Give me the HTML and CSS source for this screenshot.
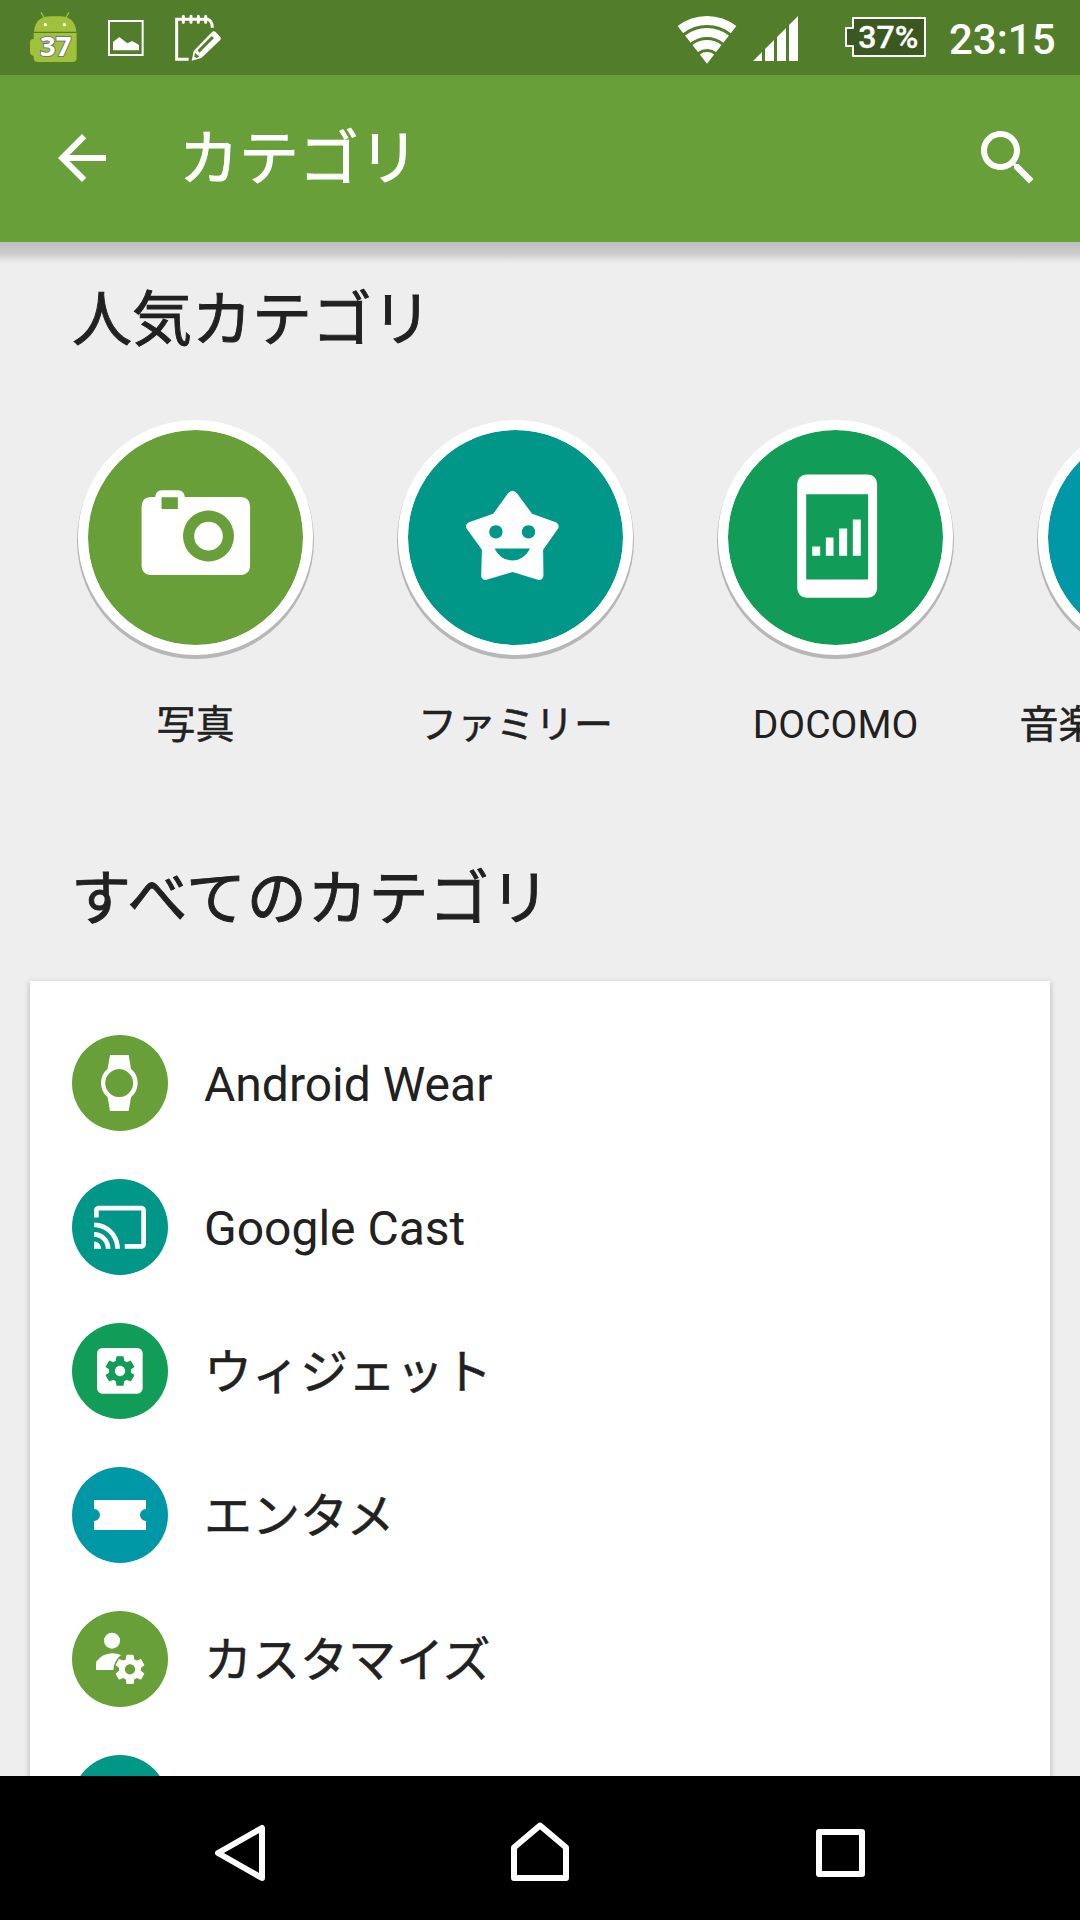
FILE: index.html
```html
<!DOCTYPE html>
<html lang="ja">
<head>
<meta charset="utf-8">
<title>カテゴリ</title>
<link rel="stylesheet" href="styles.css">
</head>
<body>
<svg class="defs" width="0" height="0" aria-hidden="true">
  <symbol id="gear" viewBox="0 0 24 24"><path d="M19.43 12.98c.04-.32.07-.64.07-.98s-.03-.66-.07-.98l2.11-1.65c.19-.15.24-.42.12-.64l-2-3.46c-.12-.22-.39-.3-.61-.22l-2.49 1c-.52-.4-1.08-.73-1.69-.98l-.38-2.65C14.46 2.18 14.25 2 14 2h-4c-.25 0-.46.18-.49.42l-.38 2.65c-.61.25-1.17.59-1.69.98l-2.49-1c-.23-.09-.49 0-.61.22l-2 3.46c-.13.22-.07.49.12.64l2.11 1.65c-.04.32-.07.65-.07.98s.03.66.07.98l-2.11 1.65c-.19.15-.24.42-.12.64l2 3.46c.12.22.39.3.61.22l2.49-1c.52.4 1.08.73 1.69.98l.38 2.65c.03.24.24.42.49.42h4c.25 0 .46-.18.49-.42l.38-2.65c.61-.25 1.17-.59 1.69-.98l2.49 1c.23.09.49 0 .61-.22l2-3.46c.12-.22.07-.49-.12-.64l-2.11-1.65zM12 15.5c-1.93 0-3.5-1.57-3.5-3.5s1.57-3.5 3.5-3.5 3.5 1.57 3.5 3.5-1.57 3.5-3.5 3.5z"/></symbol>
</svg>
<div class="screen">
  <header class="status">
    <div class="status-left">
      <svg width="47" height="75" viewBox="90 0 141 225">
        <g fill="#a0c13c">
          <path d="M123 37L133 54M207 37L197 54" stroke="#a0c13c" stroke-width="4"/>
          <path d="M102 95Q106 49 152 49H178Q225 49 229 95z"/>
          <path d="M101 99H230V174Q230 186 218 186H113Q101 186 101 174V167Q90 166 90 155V126Q90 117 101 117z"/>
        </g>
        <circle cx="136" cy="74" r="5" fill="#fff"/><circle cx="193" cy="74" r="5" fill="#fff"/>
        <text class="badge-num" x="167" y="168" text-anchor="middle">37</text>
      </svg>
      <svg width="36" height="75" viewBox="324 0 108 225">
        <rect x="327" y="63" width="101" height="102" fill="none" stroke="#fff" stroke-width="6"/>
        <path fill="#fff" d="M339 151V126L358 111L382 130L397 123L417 135V151z"/>
      </svg>
      <svg width="46" height="75" viewBox="525 0 138 225">
        <path fill="none" stroke="#fff" stroke-width="9" d="M566 178H530V58H624Q637 63 637 83"/>
        <path stroke="#fff" stroke-width="9" stroke-linecap="round" d="M550 49V67M573 49V67M595 49V67M617 49V67"/>
        <path fill="#fff" fill-rule="evenodd" d="M575 182L581 153L636 96Q641 91 647 96L660 110Q665 115 660 121L604 174zM598 158L642 114L635 108L593 151zM585 158L583 170L590 174L599 168L592 166z"/>
      </svg>
    </div>
    <div class="status-right">
      <svg class="wifi" width="60" height="75" viewBox="51 0 180 225">
        <g fill="none" stroke="#fff" stroke-width="27">
          <path d="M61.3 88.9A129.5 129.5 0 0 1 220.7 88.9"/>
          <path d="M83.5 117.3A93.5 93.5 0 0 1 198.5 117.3"/>
          <path d="M105.6 145.6A57.5 57.5 0 0 1 176.4 145.6"/>
        </g>
        <path fill="#fff" d="M141 191L119.5 163.4A35 35 0 0 1 162.5 163.4z"/>
      </svg>
      <svg class="signal" width="45" height="75" viewBox="279 0 135 225">
        <path fill="#fff" d="M279 183L306 156V183zM315 183V147L342 120V183zM351 183V111L378 84V183zM387 183V75L414 48V183z"/>
      </svg>
      <svg class="battery" width="81" height="75" viewBox="555 0 243 225">
        <path fill="#3a581f" stroke="#fff" stroke-width="6" stroke-linejoin="round" d="M579 54H795V168H579V138H558V84H579z"/>
        <text class="battery-num" x="685" y="144" text-anchor="middle">37%</text>
      </svg>
      <span class="clock">23:15</span>
    </div>
  </header>

  <div class="appbar">
    <svg class="bar-icon" viewBox="0 0 24 24"><path d="M20 11H7.83l5.59-5.59L12 4l-8 8 8 8 1.41-1.41L7.83 13H20v-2z"/></svg>
    <h1 class="title">カテゴリ</h1>
    <svg class="bar-icon" viewBox="0 0 24 24"><path d="M15.5 14h-.79l-.28-.27C15.41 12.59 16 11.11 16 9.5 16 5.91 13.09 3 9.5 3S3 5.91 3 9.5 5.91 16 9.5 16c1.61 0 3.09-.59 4.23-1.57l.27.28v.79l5 4.99L20.49 19l-4.99-5zm-6 0C7.01 14 5 11.99 5 9.5S7.01 5 9.5 5 14 7.01 14 9.5 11.99 14 9.5 14z"/></svg>
  </div>

  <main class="content">
    <h2 class="heading">人気カテゴリ</h2>
    <div class="popular">
      <div class="pop">
        <div class="disc olive">
          <svg viewBox="84 88 646 646">
            <path fill-rule="evenodd" d="M286 289Q288 269 305 269H356Q372 269 375 289H544Q571 291 571 317V497Q570 522 544 524H272Q246 522 245 497V317Q246 290 272 289zM305 290V325H354V290zM446 330a76.500 76.500 0 1 0 .1 0z"/>
            <circle cx="446" cy="407" r="43"/>
          </svg>
        </div>
        <span class="pop-label ja">写真</span>
      </div>
      <div class="pop">
        <div class="disc teal">
          <svg viewBox="84 88 646 646">
            <path fill-rule="evenodd" d="M384 279Q398 262 412 279L457 340L528 365Q541 371 535 384L490 448L491 525Q489 541 474 538L398 515L320 538Q305 540 304 525L306 448L260 384Q254 371 267 365L340 340zM344 444Q362 480 398 480Q432 480 451 444zM348 374a20 20 0 1 0 .1 0zM446 374a20 20 0 1 0 .1 0z"/>
          </svg>
        </div>
        <span class="pop-label ja">ファミリー</span>
      </div>
      <div class="pop">
        <div class="disc green">
          <svg viewBox="84 88 646 646">
            <path fill-rule="evenodd" d="M320 222H504Q530 224 532 250V564Q530 590 504 592H320Q294 590 292 564V250Q294 224 320 222zM319 281V537H505V281z"/>
            <path d="M337 438h24v28h-24zM378 411h23v55h-23zM418 384h24v82h-24zM459 357h24v109h-24z"/>
          </svg>
        </div>
        <span class="pop-label">DOCOMO</span>
      </div>
      <div class="pop">
        <div class="disc cyan"></div>
        <span class="pop-label ja pop-label-start">音楽</span>
      </div>
    </div>

    <h2 class="heading heading-all">すべてのカテゴリ</h2>
    <ul class="card">
      <li class="row">
        <svg class="dot olive" viewBox="0 0 288 288">
          <path fill-rule="evenodd" d="M114 60H170L177 101A56 56 0 0 1 177 187L170 228H114L107 187A56 56 0 0 1 107 101zM141.500 102a42 42 0 1 0 .1 0z"/>
        </svg>
        <span>Android Wear</span>
      </li>
      <li class="row">
        <svg class="dot teal" viewBox="0 0 288 288">
          <path transform="translate(58.900 58.500) scale(7.090 7.170)" d="M21 3H3c-1.100 0-2 .9-2 2v3h2V5h18v14h-7v2h7c1.100 0 2-.9 2-2V5c0-1.100-.9-2-2-2zM1 18v3h3c0-1.660-1.340-3-3-3zm0-4v2c2.760 0 5 2.240 5 5h2c0-3.870-3.130-7-7-7zm0-4v2c4.970 0 9 4.030 9 9h2c0-6.080-4.930-11-11-11z"/>
        </svg>
        <span>Google Cast</span>
      </li>
      <li class="row">
        <svg class="dot green" viewBox="0 0 288 288">
          <rect x="75" y="75" width="137" height="137" rx="16"/>
          <use class="gear-green" href="#gear" x="91.200" y="91.200" width="105.600" height="105.600"/>
        </svg>
        <span class="ja">ウィジェット</span>
      </li>
      <li class="row">
        <svg class="dot cyan" viewBox="0 0 288 288">
          <path d="M66 99H222V126A18 18 0 1 0 222 162V189H66V162A18 18 0 1 0 66 126z"/>
        </svg>
        <span class="ja">エンタメ</span>
      </li>
      <li class="row">
        <svg class="dot olive" viewBox="0 0 288 288">
          <circle cx="120" cy="89" r="24"/>
          <path d="M72 177V153Q90 128 120 127Q135 127 147 132Q126 149 124 177z"/>
          <use href="#gear" x="121.200" y="122.200" width="105.600" height="105.600"/>
        </svg>
        <span class="ja">カスタマイズ</span>
      </li>
      <li class="row">
        <svg class="dot teal" viewBox="0 0 288 288"></svg>
      </li>
    </ul>
  </main>

  <nav class="navbar">
    <svg viewBox="0 0 72 72"><path d="M58 16V66L14 41z"/></svg>
    <svg viewBox="0 0 72 72"><path d="M10 66V35.500L36 13.500L62 35.500V66z"/></svg>
    <svg viewBox="0 0 72 72"><path d="M15 20H58V62H15z"/></svg>
  </nav>
</div>
</body>
</html>
```
FILE: styles.css
```css
* { box-sizing: border-box; }

body {
  margin: 0;
  font-family: Roboto, "Noto Sans CJK JP", sans-serif;
  color: #212121;
}

.defs { display: block; }

.screen {
  display: flex;
  flex-direction: column;
  width: 1080px;
  height: 1920px;
  overflow: hidden;
  background: #eee;
}

h1, h2, ul { margin: 0; padding: 0; font-weight: 400; }

/* Japanese glyphs are drawn a touch heavier than the Latin ones */
.title, .heading { -webkit-text-stroke: .9px currentColor; }
.ja { -webkit-text-stroke: .5px currentColor; }

/* Status bar */
.status {
  display: flex;
  justify-content: space-between;
  flex: none;
  height: 75px;
  padding: 0 25px 0 30px;
  background: #527d2b;
  color: #fff;
}
.status svg { display: block; flex: none; }
.status-left { display: flex; gap: 31px; }
.status-right { display: flex; }
.signal { margin-left: 16px; }
.battery { margin-left: 47px; }
.clock {
  width: 106px;
  margin-left: 23px;
  font-size: 42px;
  font-weight: 500;
  line-height: 79px;
  white-space: nowrap;
}
.badge-num {
  font-family: "Open Sans", sans-serif;
  font-size: 82px;
  font-weight: 700;
  fill: #fff;
  stroke: #777;
  stroke-width: 6px;
  paint-order: stroke;
}
.battery-num {
  font-size: 96px;
  font-weight: 500;
  fill: #fff;
  stroke: #fff;
  stroke-width: 1px;
}

/* App bar */
.appbar {
  position: relative;
  z-index: 1;
  display: flex;
  align-items: center;
  flex: none;
  height: 167px;
  padding: 0 36px 1px 46px;
  background: #689f38;
  color: #fff;
}
.appbar::after {
  content: "";
  position: absolute;
  top: 100%;
  left: 0;
  right: 0;
  height: 22px;
  background: linear-gradient(rgba(0, 0, 0, .2), rgba(0, 0, 0, .14) 55%, rgba(0, 0, 0, .04) 82%, transparent);
}
.bar-icon { flex: none; width: 72px; height: 72px; fill: #fff; }
.title {
  flex: 1;
  padding: 4px 0 0 61px;
  font-size: 60px;
  line-height: 80px;
}

/* Scrolling content */
.content { flex: 1; min-height: 0; overflow: hidden; }
.heading {
  margin: 39px 0 0 72px;
  font-size: 60px;
  line-height: 80px;
}

.popular {
  display: flex;
  width: 1400px;
  margin-top: 59px;
  padding-left: 35.5px;
}
.pop {
  display: flex;
  flex-direction: column;
  align-items: center;
  width: 320px;
}
.disc {
  width: 235px;
  height: 235px;
  border: 10px solid #fff;
  border-radius: 50%;
  box-shadow: 0 3px 0 1px #b7b7b7;
  background-clip: padding-box;
}
.disc svg { display: block; width: 215px; height: 215px; fill: #fff; }
.pop-label {
  margin-top: 45px;
  font-size: 39px;
  line-height: 50px;
}
.pop-label-start { align-self: flex-start; margin-left: 24px; }

.olive { background-color: #689f38; }
.teal { background-color: #009688; }
.green { background-color: #119d58; }
.cyan { background-color: #0097a7; }

.heading-all { margin-top: 110px; margin-left: 71px; letter-spacing: .8px; }

.card {
  display: flex;
  flex-direction: column;
  gap: 48px;
  margin: 41px 30px 0;
  padding: 54px 42px;
  list-style: none;
  background: #fff;
  box-shadow: 0 2px 6px rgba(0, 0, 0, .25);
}
.row {
  display: flex;
  align-items: center;
  gap: 36px;
  height: 96px;
  font-size: 48px;
  line-height: 60px;
}
.row span { padding-top: 4px; }
.dot { flex: none; width: 96px; height: 96px; border-radius: 50%; fill: #fff; }
.gear-green { fill: #119d58; }

/* Navigation bar */
.navbar {
  display: grid;
  grid-template-columns: repeat(3, 300px);
  justify-content: center;
  align-items: center;
  justify-items: center;
  flex: none;
  height: 144px;
  background: #000;
}
.navbar svg {
  width: 72px;
  height: 72px;
  fill: none;
  stroke: #fff;
  stroke-width: 6;
  stroke-linejoin: round;
}
```
